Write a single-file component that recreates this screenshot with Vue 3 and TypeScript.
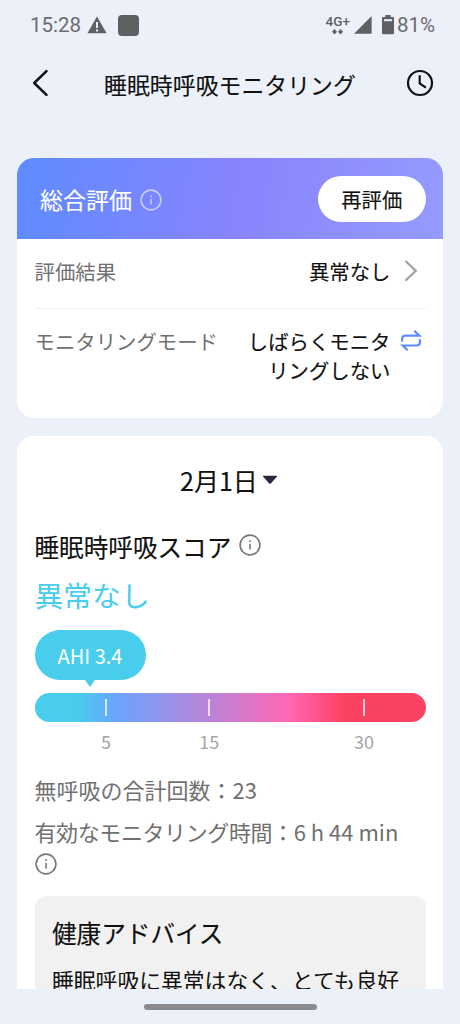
<script setup lang="ts">
interface Tick {
  value: number
  position: number
}

const ahi = 3.4
const apneaCount = 23
const ticks: Tick[] = [
  { value: 5, position: 18.3 },
  { value: 15, position: 44.7 },
  { value: 30, position: 84.3 },
]
</script>

<template>
  <div class="screen">
    <div class="status">
      <span class="time">15:28</span>
      <svg class="warn" width="20" height="18" viewBox="0 0 20 18">
        <path d="M10 .6 19.6 17.2H.4Z" fill="#5f6063" />
        <path d="M10 6v6M10 13.4v2.2" stroke="#ecf0f8" stroke-width="2" />
      </svg>
      <span class="square"></span>
      <div class="network">
        <span>4G+</span>
        <svg width="11" height="6" viewBox="0 0 11 6">
          <path d="M2.5 0 5 2.8 2.5 5.6 0 2.8ZM8.5 0 11 2.8 8.5 5.6 6 2.8Z" fill="#5f6063" />
        </svg>
      </div>
      <svg class="signal" width="18" height="18" viewBox="0 0 18 18">
        <path d="M17.6 0V17.7H0Z" fill="#5f6063" />
      </svg>
      <svg class="battery" width="12" height="20" viewBox="0 0 12 20">
        <path d="M3.3 0h5.4v2H11a1 1 0 0 1 1 1v15.3a1 1 0 0 1-1 1H1a1 1 0 0 1-1-1V3a1 1 0 0 1 1-1h2.3Z" fill="#5f6063" />
        <path d="M2 4.2h8v2H2Z" fill="#ecf0f8" />
      </svg>
      <span class="percent">81%</span>
    </div>

    <header class="nav">
      <svg width="18" height="28" viewBox="0 0 18 28">
        <path d="M14.5 2.2 2.2 14 14.5 25.8" fill="none" stroke="#111" stroke-width="2.5" stroke-linecap="round" stroke-linejoin="round" />
      </svg>
      <h1>睡眠時呼吸モニタリング</h1>
      <svg width="28" height="28" viewBox="0 0 28 28" fill="none" stroke="#111" stroke-width="2.2">
        <circle cx="14" cy="14" r="12" />
        <path d="M13.7 6.2v8.2l6.2 4.3" />
      </svg>
    </header>

    <main class="content">
      <section class="card summary">
        <div class="summary-head">
          <h2>総合評価</h2>
          <svg class="info light" width="22" height="22" viewBox="0 0 22 22">
            <circle cx="11" cy="11" r="9.9" />
            <path d="M11 9.7v5.8M11 6.3v1.8" />
          </svg>
          <button type="button">再評価</button>
        </div>
        <div class="row result">
          <span class="label">評価結果</span>
          <span class="value">異常なし</span>
          <svg class="row-icon" width="22" height="24" viewBox="0 0 22 24">
            <path d="M5.5 2 15.8 11.8 5.5 21.6" fill="none" stroke="#a4a4a4" stroke-width="2.3" />
          </svg>
        </div>
        <div class="row mode">
          <span class="label">モニタリングモード</span>
          <span class="value">しばらくモニタ<br />リングしない</span>
          <svg class="row-icon" width="22" height="24" viewBox="0 0 22 24" fill="none" stroke="#5d8aff" stroke-width="2.2">
            <path d="M2.1 12.6V10Q2.1 6.6 5.5 6.6H19.3L14.3 1.8" />
            <path d="M19.9 10.2v2.9q0 3.4-3.4 3.4H2.7l5 4.8" />
          </svg>
        </div>
      </section>

      <section class="card score">
        <div class="date">
          <span>2月1日</span>
          <svg width="16" height="10" viewBox="0 0 16 10">
            <path d="M1.5.8h13q1 0 .3.9L9 8.3Q8 9.4 7 8.3L1.2 1.7Q.5.8 1.5.8Z" fill="#2b2540" />
          </svg>
        </div>
        <div class="score-title">
          <h2>睡眠時呼吸スコア</h2>
          <svg class="info" width="22" height="22" viewBox="0 0 22 22">
            <circle cx="11" cy="11" r="9.9" />
            <path d="M11 9.7v5.8M11 6.3v1.8" />
          </svg>
        </div>
        <p class="verdict">異常なし</p>
        <div class="bubble">AHI {{ ahi }}</div>
        <div class="scale">
          <i v-for="tick in ticks" :key="tick.value" class="tick" :style="{ left: tick.position + '%' }"></i>
        </div>
        <div class="scale-labels">
          <span v-for="tick in ticks" :key="tick.value" :style="{ left: tick.position + '%' }">{{ tick.value }}</span>
        </div>
        <p class="metric">無呼吸の合計回数：{{ apneaCount }}</p>
        <p class="metric second"><span class="tight">有効なモニタリング時間：</span>6 h 44 min</p>
        <svg class="info metric-info" width="22" height="22" viewBox="0 0 22 22">
          <circle cx="11" cy="11" r="9.9" />
          <path d="M11 9.7v5.8M11 6.3v1.8" />
        </svg>
        <div class="advice">
          <h3>健康アドバイス</h3>
          <p>睡眠呼吸に異常はなく、とても良好</p>
        </div>
      </section>
    </main>

    <footer class="gesture"><span></span></footer>
  </div>
</template>

<style>
body {
  background: #ecf0f8;
}
</style>

<style scoped>
.screen {
  width: 460px;
  height: 1024px;
  display: flex;
  flex-direction: column;
  overflow: hidden;
  background: #ecf0f8;
  color: #111;
  font-family: "Noto Sans CJK JP", sans-serif;
  font-weight: 400;
}
* {
  box-sizing: border-box;
}
h1,
h2,
h3,
p {
  margin: 0;
  font-weight: 400;
  white-space: nowrap;
}
h1,
h2,
h3,
.value,
.date,
.summary-head button {
  -webkit-text-stroke: 0.12px currentColor;
}
svg {
  display: block;
  flex: none;
}
.status {
  height: 50px;
  flex: none;
  display: flex;
  align-items: center;
  padding: 0 25px 0 30px;
  color: #6a6b6e;
  font: 400 20.5px/24px Roboto, sans-serif;
}
.time {
  width: 57px;
}
.square {
  width: 21px;
  height: 21px;
  margin-left: 11px;
  border-radius: 4px;
  background: #5f6063;
}
.network {
  display: flex;
  flex-direction: column;
  align-items: center;
  margin-left: auto;
  margin-top: -1px;
  color: #5f6063;
  font: 500 13.5px/13px Roboto, sans-serif;
}
.network svg {
  margin-top: 1px;
}
.signal {
  margin-left: 4px;
}
.battery {
  margin-left: 10px;
}
.percent {
  margin-left: 3px;
}
.nav {
  height: 66px;
  flex: none;
  display: flex;
  align-items: center;
  justify-content: space-between;
  padding: 0 26px 0 32px;
}
.nav h1 {
  font-size: 22.9px;
  line-height: 32px;
  margin-top: 2px;
  margin-left: 4px;
}
.content {
  flex: none;
  height: 873px;
  padding: 42px 17px 0;
  overflow: hidden;
}
.card {
  background: #fff;
  border-radius: 17px;
}
.summary {
  height: 260px;
  overflow: hidden;
}
.summary-head {
  height: 80.5px;
  display: flex;
  align-items: center;
  padding: 1px 17.5px 0 23px;
  background: linear-gradient(100deg, #5e8bff 0%, #8884fd 52%, #959bff 100%);
  color: #fff;
}
.summary-head h2 {
  font-size: 23px;
  line-height: 32px;
  margin-top: 1px;
  width: 100px;
}
.info {
  fill: none;
  stroke: #777;
  stroke-width: 1.6;
}
.info.light {
  margin-top: 2px;
  stroke: rgba(255, 255, 255, 0.58);
}
.summary-head button {
  width: 107.5px;
  height: 46px;
  margin-left: auto;
  padding: 0;
  border: 0;
  border-radius: 23px;
  background: #fff;
  color: #111;
  font: inherit;
  font-size: 20.3px;
}
.row {
  display: flex;
  margin: 0 17.5px;
  font-size: 20.4px;
  line-height: 28.6px;
}
.label {
  color: #707070;
}
.value {
  margin-left: auto;
  text-align: right;
}
.row-icon {
  margin-top: 2px;
  margin-left: 9px;
  margin-right: 4px;
}
.result {
  height: 70px;
  padding-top: 18px;
  border-bottom: 1px solid #e9effb;
}
.mode {
  padding-top: 18.5px;
}
.score {
  height: 700px;
  margin-top: 17.5px;
  padding: 26px 17.5px 0;
}
.date {
  height: 36px;
  display: flex;
  justify-content: center;
  align-items: center;
  gap: 4px;
  padding-right: 2px;
  font-size: 25px;
  line-height: 36px;
}
.score-title {
  display: flex;
  align-items: center;
  height: 36px;
  margin-top: 30.5px;
  gap: 8px;
}
.score-title h2 {
  font-size: 24.6px;
  line-height: 36px;
}
.score-title .info {
  margin-top: -3px;
}
.verdict {
  margin-top: 11px;
  color: #48cdec;
  font-size: 28.8px;
  line-height: 40px;
}
.bubble {
  position: relative;
  width: 111px;
  height: 50.5px;
  margin-top: 14.5px;
  border-radius: 25.5px;
  background: #48cdec;
  color: #fff;
  font-size: 20px;
  line-height: 51px;
  text-align: center;
}
.bubble::after {
  content: "";
  position: absolute;
  left: 50px;
  top: 50px;
  border: 5.5px solid transparent;
  border-top: 7.5px solid #48cdec;
  border-bottom: 0;
}
.scale {
  position: relative;
  height: 28.5px;
  margin-top: 13px;
  border-radius: 15px;
  background: linear-gradient(90deg, #48cdec 0 11%, #6aa4ff 20.5%, #ff67b4 65%, #fb4263 79%, #fb4263 100%);
}
.tick {
  position: absolute;
  top: 5.5px;
  width: 2px;
  height: 17.5px;
  margin-left: -1px;
  background: rgba(255, 255, 255, 0.72);
}
.scale-labels {
  position: relative;
  height: 36px;
  color: #a5a5a5;
  font-size: 18px;
  line-height: 38px;
}
.scale-labels span {
  position: absolute;
  transform: translateX(-50%);
}
.metric {
  margin-top: 15.5px;
  color: #707070;
  font-size: 22px;
  line-height: 32px;
}
.metric.second {
  margin-top: 10px;
}
.tight {
  letter-spacing: -0.4px;
}
.metric-info {
  margin-top: 5.5px;
}
.advice {
  height: 200px;
  margin-top: 21.5px;
  padding: 18px 17.5px;
  border-radius: 11px;
  background: #f1f1f1;
}
.advice h3 {
  font-size: 24.6px;
  line-height: 36px;
}
.advice p {
  margin-top: 14px;
  font-size: 21.8px;
  line-height: 32px;
}
.gesture {
  flex: 1;
  display: flex;
  justify-content: center;
  padding-top: 15px;
}
.gesture span {
  width: 173px;
  height: 6px;
  border-radius: 3px;
  background: #8b8b8f;
}
</style>
